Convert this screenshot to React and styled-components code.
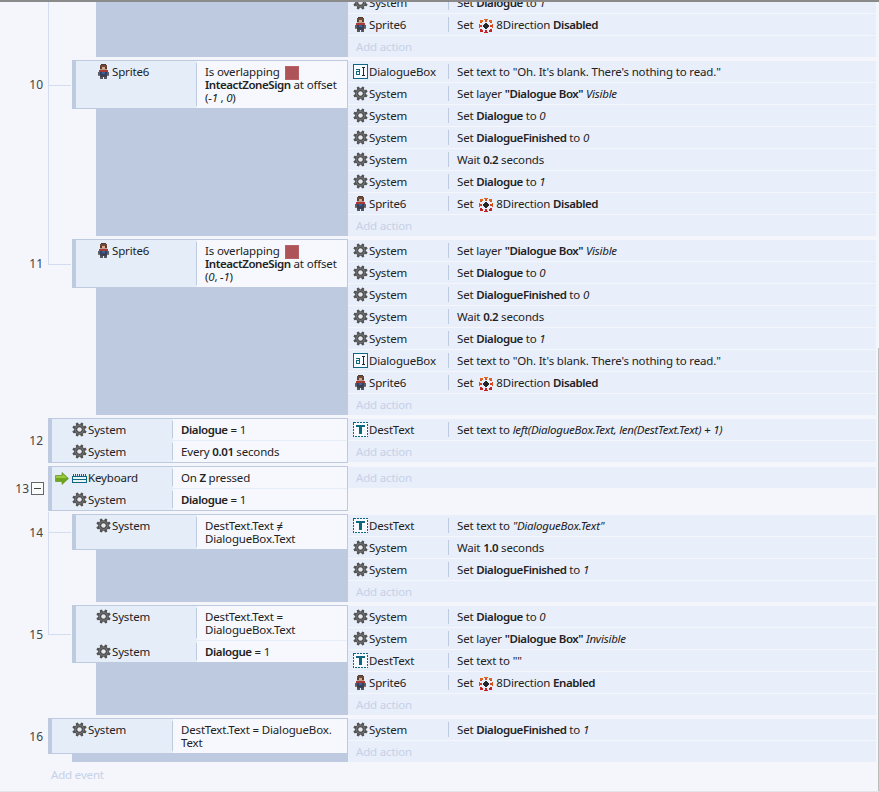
import React from 'react';
import styled, { createGlobalStyle } from 'styled-components';

const GlobalStyle = createGlobalStyle`
  html, body {
    margin: 0;
    padding: 0;
    background: #f4f6fc;
    overflow: hidden;
  }
  body {
    font-family: "Noto Sans", "Open Sans", sans-serif;
    font-size: 11.5px;
    letter-spacing: -0.17px;
    color: #222;
  }
`;

const Viewport = styled.div`
  position: relative;
  width: 879px;
  height: 792px;
  box-sizing: border-box;
  border-top: 2px solid #8a8a8a;
  border-bottom: 1px solid #e2e4ea;
  overflow: hidden;
  background: #f4f6fc;
`;

const ScrollThumb = styled.div`
  position: absolute;
  right: 0;
  top: 346px;
  bottom: 0;
  width: 1px;
  background: #bdbdbd;
`;

const Sheet = styled.div`
  margin-top: -11px;
  width: 876px;
`;

const EventRow = styled.div`
  position: relative;
  display: flex;
  margin-bottom: 2px;

  ${(p) => p.$branch && `
    &::before {
      content: '';
      position: absolute;
      left: 48px;
      top: 0;
      bottom: -2px;
      width: 1px;
      background: #d3ddf1;
    }
  `}
`;

const Lead = styled.div`
  width: 348px;
  flex-shrink: 0;
  display: flex;
  flex-direction: column;
  padding-bottom: 1px;
  box-sizing: border-box;
`;

const Head = styled.div`
  display: flex;
`;

const Gutter = styled.div`
  position: relative;
  flex-shrink: 0;
  width: ${(p) => (p.$level ? 72 : 48)}px;
  display: flex;
  align-items: center;

  ${(p) => p.$level && `
    &::before {
      content: '';
      position: absolute;
      left: 48px;
      top: -2px;
      width: 22px;
      height: calc(50% + 2px);
      border-left: 1px solid #d3ddf1;
      border-bottom: 1px solid #d3ddf1;
    }
  `}
`;

const NumberCell = styled.div`
  width: 48px;
  box-sizing: border-box;
  display: flex;
  justify-content: flex-end;
  align-items: center;
  gap: 2px;
  padding-right: ${(p) => (p.$collapsible ? 4 : 5)}px;
  font-size: 12px;
  letter-spacing: 0;
  color: #444;
`;

const Collapse = styled.span`
  position: relative;
  width: 11px;
  height: 11px;
  border: 1px solid #666;
  background: #fbfbfb;

  &::after {
    content: '';
    position: absolute;
    left: 2px;
    right: 2px;
    top: 5px;
    height: 1px;
    background: #444;
  }
`;

const CondBox = styled.div`
  flex: 1;
  display: flex;
  flex-direction: column;
  background: #e5edf9;
  border: 1px solid #bdcadf;
  border-left-width: 4px;
`;

const CondRow = styled.div`
  display: flex;

  & + & {
    margin-top: 1px;
  }
`;

const ObjectCell = styled.div`
  position: relative;
  flex-shrink: 0;
  width: 121px;
  box-sizing: border-box;
  display: flex;
  align-items: flex-start;
  padding: 4px 0 0 20px;
  line-height: 13px;

  &::after {
    content: '';
    position: absolute;
    right: 0;
    top: 2px;
    bottom: 2px;
    width: 1px;
    background: #bdcadf;
  }
`;

const IconSlot = styled.span`
  flex-shrink: 0;
  width: 16px;
  height: 13px;
  display: flex;
  align-items: center;
`;

const TriggerMark = styled.span`
  position: absolute;
  left: 3px;
  top: 5px;
  display: flex;
`;

const CondText = styled.div`
  flex: 1;
  background: #f6f8fe;
  padding: 4px 4px 4px 8px;
  line-height: 13px;
  white-space: nowrap;
`;

const Fill = styled.div`
  flex: 1;
  margin-left: ${(p) => (p.$level ? 96 : 72)}px;
  background: #bdcadf;
`;

const Actions = styled.div`
  flex: 1;
  padding-top: 1px;
`;

const ActionRow = styled.div`
  height: 21px;
  margin-bottom: 1px;
  display: flex;
  align-items: center;
  background: #e8eefa;
  white-space: nowrap;
`;

const ActionName = styled.div`
  flex-shrink: 0;
  width: 101px;
  height: 15px;
  box-sizing: border-box;
  padding-left: 5px;
  display: flex;
  align-items: center;
  border-right: 1px solid #bdcadf;
`;

const ActionText = styled.div`
  padding-left: 8px;
  white-space: pre;
`;

const AddAction = styled.div`
  padding-left: 8px;
  color: #c6d1e7;
`;

const AddEvent = styled.div`
  padding: 3px 0 0 51px;
  line-height: 13px;
  color: #c6d1e7;
`;

const Strong = styled.b`
  font-weight: 600;
  letter-spacing: -0.42px;
`;

const Em = styled.i`
  font-style: italic;
  letter-spacing: -0.25px;
`;

const Swatch = styled.span`
  display: inline-block;
  width: 14px;
  height: 14px;
  margin: -2px 0 -2px 3px;
  vertical-align: middle;
  background: #ae5358;
  box-shadow: inset 0 0 0 1px #b86267;
`;

const DirectionSlot = styled.span`
  display: inline-block;
  width: 14px;
  height: 14px;
  margin: -2px 3px -2px 3px;
  vertical-align: middle;

  svg {
    display: block;
  }
`;

function gearPath() {
  const teeth = 8;
  const pts = [];
  for (let i = 0; i < teeth; i++) {
    const a = (i / teeth) * Math.PI * 2 + Math.PI / 8;
    const w = Math.PI / teeth;
    const polar = (r, t) => `${(7.5 + r * Math.cos(t)).toFixed(2)} ${(7.5 + r * Math.sin(t)).toFixed(2)}`;
    pts.push(polar(5.4, a - w * 0.72), polar(7.3, a - w * 0.4), polar(7.3, a + w * 0.4), polar(5.4, a + w * 0.72));
  }
  return `M${pts.join('L')}Z`;
}

const GEAR = gearPath();

const Gear = () => (
  <svg width="15" height="15" viewBox="0 0 15 15">
    <path d={GEAR} fill="#545454" />
    <circle cx="7.5" cy="7.5" r="4.6" fill="#6f7174" />
    <circle cx="7.5" cy="7.5" r="3.2" fill="#3f3f3f" />
    <circle cx="7.5" cy="7.5" r="2.3" fill="#e6e8ee" />
  </svg>
);

const SPRITE_PIXELS = [
  [4, 0, 5, 1, '#4e3a30'],
  [3, 1, 7, 2, '#6e4a38'],
  [3, 3, 2, 2, '#5a3d30'],
  [8, 3, 2, 2, '#5a3d30'],
  [5, 3, 3, 2, '#d9a98a'],
  [3, 5, 7, 1, '#b8a08e'],
  [2, 6, 9, 2, '#a83a36'],
  [1, 8, 2, 3, '#5a5f69'],
  [10, 8, 2, 3, '#5a5f69'],
  [3, 8, 7, 3, '#33405f'],
  [5, 8, 3, 2, '#3d5f9e'],
  [1, 11, 2, 1, '#8a7468'],
  [10, 11, 2, 1, '#8a7468'],
  [3, 11, 7, 2, '#3e4250'],
  [3, 13, 3, 2, '#55585f'],
  [7, 13, 3, 2, '#55585f'],
];

const SpriteSvg = styled.svg`
  margin-left: 1px;
`;

const Sprite = () => (
  <SpriteSvg width="13" height="15" viewBox="0 0 13 15" shapeRendering="crispEdges">
    {SPRITE_PIXELS.map(([x, y, w, h, fill]) => (
      <rect key={`${x}-${y}`} x={x} y={y} width={w} height={h} fill={fill} />
    ))}
  </SpriteSvg>
);

const DialogueIcon = () => (
  <svg width="15" height="15" viewBox="0 0 15 15" shapeRendering="crispEdges">
    <rect x="0.5" y="0.5" width="14" height="14" fill="#f8fbff" stroke="#0f6680" />
    <rect x="3" y="5" width="4" height="1" fill="#0f6680" />
    <rect x="6" y="5" width="1" height="5" fill="#0f6680" />
    <rect x="3" y="7" width="4" height="1" fill="#0f6680" />
    <rect x="3" y="7" width="1" height="3" fill="#0f6680" />
    <rect x="3" y="10" width="4" height="1" fill="#0f6680" />
    <rect x="9" y="3" width="3" height="1" fill="#22292e" />
    <rect x="10" y="3" width="1" height="9" fill="#22292e" />
    <rect x="9" y="11" width="3" height="1" fill="#22292e" />
  </svg>
);

const TextIcon = () => (
  <svg width="15" height="15" viewBox="0 0 15 15" shapeRendering="crispEdges">
    <rect x="0.5" y="0.5" width="14" height="14" fill="#f8fbff" stroke="#0f6680" strokeDasharray="2 1" />
    <rect x="3" y="3" width="9" height="2" fill="#0f6680" />
    <rect x="6" y="3" width="3" height="9" fill="#0f6680" />
  </svg>
);

const KeyboardIcon = () => (
  <svg width="15" height="11" viewBox="0 0 15 11" shapeRendering="crispEdges">
    <rect x="0.5" y="4.5" width="14" height="6" fill="#e8f4f8" stroke="#0f6680" />
    {[1, 3, 5, 7, 9, 11, 13].map((x) => (
      <rect key={x} x={x} y="2" width="1" height="3" fill="#0f6680" />
    ))}
    <rect x="1" y="7" width="13" height="1" fill="#0f6680" />
  </svg>
);

const ArrowIcon = () => (
  <svg width="14" height="13" viewBox="0 0 14 13">
    <path d="M0.5 3.5H7V0.5L13.5 6.5L7 12.5V9.5H0.5Z" fill="#6da51f" stroke="#5b8a17" strokeWidth="0.6" />
    <path d="M1 4H7.5V2L12 6H1Z" fill="#9ccb3d" />
  </svg>
);

const DIRECTION_RECTS = [
  [5, 0, 4, 1, '#e0641e'], [6, 1, 2, 2, '#d4501c'],
  [1, 1, 3, 2, '#e0641e'], [10, 1, 3, 2, '#e0641e'],
  [1, 3, 2, 1, '#d4501c'], [11, 3, 2, 1, '#d4501c'],
  [0, 5, 1, 4, '#d4501c'], [1, 6, 2, 2, '#cf3f1c'],
  [13, 5, 1, 4, '#d4501c'], [11, 6, 2, 2, '#cf3f1c'],
  [1, 10, 2, 1, '#c62222'], [11, 10, 2, 1, '#c62222'],
  [1, 11, 3, 2, '#c62222'], [10, 11, 3, 2, '#c62222'],
  [6, 11, 2, 2, '#c62222'], [5, 13, 4, 1, '#c62222'],
  [5, 5, 4, 4, '#26262b'], [6, 4, 2, 6, '#26262b'], [4, 6, 6, 2, '#26262b'],
];

const DirectionIcon = () => (
  <svg width="14" height="14" viewBox="0 0 14 14" shapeRendering="crispEdges">
    {DIRECTION_RECTS.map(([x, y, w, h, fill]) => (
      <rect key={`${x}-${y}-${w}`} x={x} y={y} width={w} height={h} fill={fill} />
    ))}
  </svg>
);

const OBJECTS = {
  System: <Gear />,
  Sprite6: <Sprite />,
  DialogueBox: <DialogueIcon />,
  DestText: <TextIcon />,
  Keyboard: <KeyboardIcon />,
};

const Direction = ({ state }) => (
  <>
    Set <DirectionSlot><DirectionIcon /></DirectionSlot>8Direction <Strong>{state}</Strong>
  </>
);

const setVar = (name, value) => (
  <>Set <Strong>{name}</Strong> to <Em>{value}</Em></>
);

const setLayer = (state) => (
  <>Set layer <Strong>"Dialogue Box"</Strong> <Em>{state}</Em></>
);

const wait = (secs) => (
  <>Wait <Strong>{secs}</Strong> seconds</>
);

const blankText = 'Set text to "Oh. It\'s blank. There\'s nothing to read."';

const overlap = (a, b) => (
  <>
    Is overlapping <Swatch /><br />
    <Strong>InteactZoneSign</Strong> at offset<br />
    (<Em>{a}</Em>, <Em>{b}</Em>)
  </>
);

const dialogueIs1 = <><Strong>Dialogue</Strong> = 1</>;

const EVENTS = [
  {
    level: 1,
    branch: true,
    actions: [
      ['System', setVar('Dialogue', '1')],
      ['Sprite6', <Direction state="Disabled" />],
    ],
  },
  {
    n: 10,
    level: 1,
    branch: true,
    conds: [['Sprite6', overlap('-1 ', ' 0')]],
    actions: [
      ['DialogueBox', blankText],
      ['System', setLayer('Visible')],
      ['System', setVar('Dialogue', '0')],
      ['System', setVar('DialogueFinished', '0')],
      ['System', wait('0.2')],
      ['System', setVar('Dialogue', '1')],
      ['Sprite6', <Direction state="Disabled" />],
    ],
  },
  {
    n: 11,
    level: 1,
    conds: [['Sprite6', overlap('0', ' -1')]],
    actions: [
      ['System', setLayer('Visible')],
      ['System', setVar('Dialogue', '0')],
      ['System', setVar('DialogueFinished', '0')],
      ['System', wait('0.2')],
      ['System', setVar('Dialogue', '1')],
      ['DialogueBox', blankText],
      ['Sprite6', <Direction state="Disabled" />],
    ],
  },
  {
    n: 12,
    level: 0,
    conds: [
      ['System', dialogueIs1],
      ['System', <>Every <Strong>0.01</Strong> seconds</>],
    ],
    actions: [
      ['DestText', <>Set text to <Em>left(DialogueBox.Text, len(DestText.Text) + 1)</Em></>],
    ],
  },
  {
    n: 13,
    level: 0,
    collapsible: true,
    conds: [
      ['Keyboard', <>On <Strong>Z</Strong> pressed</>, true],
      ['System', dialogueIs1],
    ],
    actions: [],
  },
  {
    n: 14,
    level: 1,
    branch: true,
    conds: [['System', <>DestText.Text ≠<br />DialogueBox.Text</>]],
    actions: [
      ['DestText', <>Set text to <Em>"DialogueBox.Text"</Em></>],
      ['System', wait('1.0')],
      ['System', setVar('DialogueFinished', '1')],
    ],
  },
  {
    n: 15,
    level: 1,
    conds: [
      ['System', <>DestText.Text =<br />DialogueBox.Text</>],
      ['System', dialogueIs1],
    ],
    actions: [
      ['System', setVar('Dialogue', '0')],
      ['System', setLayer('Invisible')],
      ['DestText', 'Set text to ""'],
      ['Sprite6', <Direction state="Enabled" />],
    ],
  },
  {
    n: 16,
    level: 0,
    conds: [['System', <>DestText.Text = DialogueBox.<br />Text</>]],
    actions: [
      ['System', setVar('DialogueFinished', '1')],
    ],
  },
];

function Event({ event }) {
  const { n, level, branch, collapsible, conds, actions } = event;
  return (
    <EventRow $branch={branch}>
      <Lead>
        {conds && (
          <Head>
            <Gutter $level={level}>
              <NumberCell $collapsible={collapsible}>
                {n}
                {collapsible && <Collapse />}
              </NumberCell>
            </Gutter>
            <CondBox>
              {conds.map(([object, text, trigger], i) => (
                <CondRow key={i}>
                  <ObjectCell>
                    {trigger && <TriggerMark><ArrowIcon /></TriggerMark>}
                    <IconSlot>{OBJECTS[object]}</IconSlot>
                    {object}
                  </ObjectCell>
                  <CondText>{text}</CondText>
                </CondRow>
              ))}
            </CondBox>
          </Head>
        )}
        <Fill $level={level} />
      </Lead>
      <Actions>
        {actions.map(([object, text], i) => (
          <ActionRow key={i}>
            <ActionName>
              <IconSlot>{OBJECTS[object]}</IconSlot>
              {object}
            </ActionName>
            <ActionText>{text}</ActionText>
          </ActionRow>
        ))}
        <ActionRow>
          <AddAction>Add action</AddAction>
        </ActionRow>
      </Actions>
    </EventRow>
  );
}

export default function App() {
  return (
    <>
      <GlobalStyle />
      <Viewport>
        <Sheet>
          {EVENTS.map((event, i) => (
            <Event key={i} event={event} />
          ))}
          <AddEvent>Add event</AddEvent>
        </Sheet>
        <ScrollThumb />
      </Viewport>
    </>
  );
}
